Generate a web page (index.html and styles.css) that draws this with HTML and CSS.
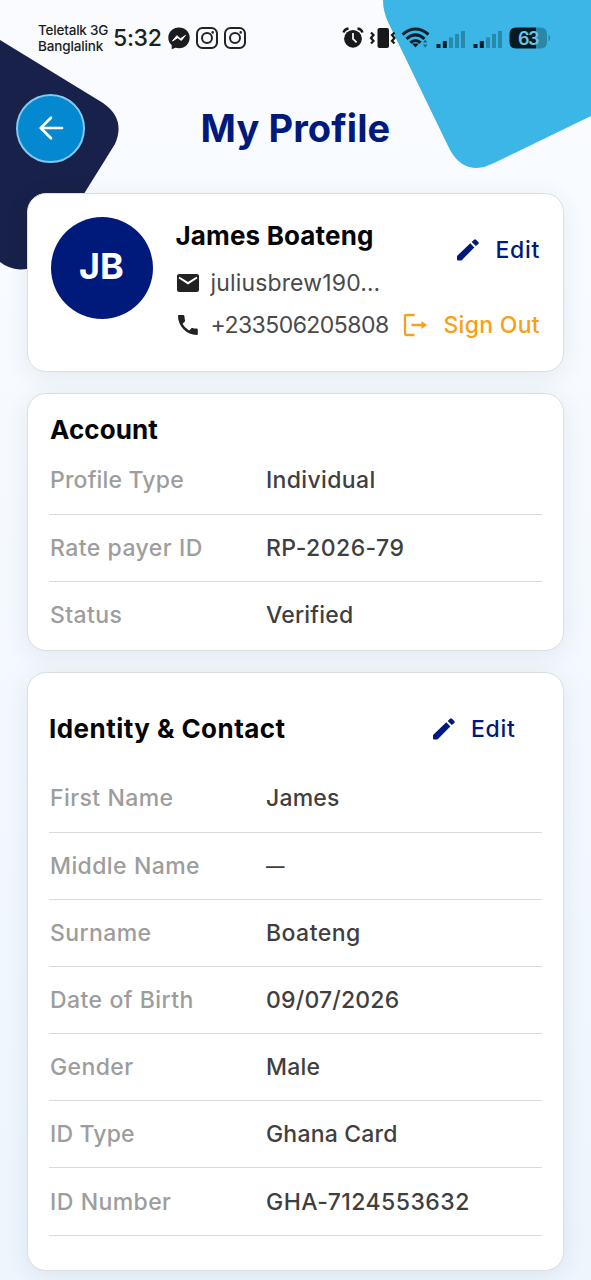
FILE: index.html
```html
<!DOCTYPE html>
<html lang="en">
<head>
<meta charset="utf-8">
<title>My Profile</title>
<link rel="stylesheet" href="styles.css">
</head>
<body>
<svg class="backdrop" width="591" height="280" viewBox="0 0 591 280" aria-hidden="true">
  <path d="M0 40 L103 103 Q126 119 115 144 L44 258 Q34 270 20 269.500 Q8 268.500 0 262Z" fill="#172149"/>
  <path d="M383 0 Q383 11 388 22 L450 150 Q460 168 477 168 Q485 167.500 493 163.500 L591 116 V0Z" fill="#3bb6e7"/>
</svg>
<div class="screen">
  <div class="statusbar">
    <div class="carrier"><span class="c1">Teletalk 3G</span><span class="c2">Banglalink</span></div>
    <span class="clock">5:32</span>
    <svg class="messenger" width="22" height="23" viewBox="0 0 22 23"><path d="M11 0.500C4.800 .5 .3 5 .3 10.700c0 3 1.400 5.600 3.400 7.400v4.100l3.800-1.400c1.100.3 2.300.4 3.500.4 6.200 0 10.700-4.700 10.700-10.500S17.200.5 11 .5Z" fill="#1b1c1e"/><path d="M4.500 14 8.800 8.700 12.400 11.800 17.500 8.400 13.300 13.400 9.700 10.700Z" fill="#fff" stroke="#fff" stroke-width="1" stroke-linejoin="round"/></svg>
    <svg class="insta" width="22" height="22" viewBox="0 0 22 22" fill="none" stroke="#222325" stroke-width="2"><rect x="1" y="1" width="20" height="20" rx="5.500"/><circle cx="11" cy="11" r="5"/><circle cx="16.700" cy="5.400" r=".7" stroke-width="1.200"/></svg>
    <svg class="insta" width="22" height="22" viewBox="0 0 22 22" fill="none" stroke="#222325" stroke-width="2"><rect x="1" y="1" width="20" height="20" rx="5.500"/><circle cx="11" cy="11" r="5"/><circle cx="16.700" cy="5.400" r=".7" stroke-width="1.200"/></svg>
    <svg class="system" width="212" height="24" viewBox="0 0 212 24">
      <g fill="#17191b">
        <circle cx="13" cy="12.800" r="8.900"/>
        <path d="M3.500 6.500Q4.500 3 8.500 2.500M17.500 2.500Q21.500 3 22.500 6.500" fill="none" stroke="#17191b" stroke-width="2.400"/>
        <path d="M13 7v6l3.600 3.300" fill="none" stroke="#fff" stroke-width="1.700"/>
        <rect x="37.500" y="2" width="11.500" height="20" rx="2"/>
        <path d="M31 6.500l2.500 2.500-2.500 3 2.500 3-2.500 2.500M54.500 6.500 52 9l2.500 3-2.500 3 2.500 2.500" fill="none" stroke="#17191b" stroke-width="2.200"/>
      </g>
      <g fill="none" stroke="#0b2029" stroke-width="3">
        <path d="M62.500 8.500Q75.500-2.500 88.500 8.500"/>
        <path d="M66.500 12.800Q75.500 5 84.500 12.800"/>
        <path d="M70.300 16.700Q75.500 12.200 80.700 16.700"/>
      </g>
      <path d="M72 17.500h7L75.500 21.500Z" fill="#0b2029"/>
      <path d="M83 16.500 85.200 13.500 87.400 16.500ZM83 18.500 85.200 21.500 87.400 18.500Z" fill="#18617c"/>
      <g fill="#071e29"><rect x="96.500" y="18" width="4" height="4"/><rect x="102.800" y="15" width="4" height="7"/><rect x="133.500" y="18" width="4" height="4"/><rect x="139.800" y="15" width="4" height="7"/></g>
      <g fill="#278aad"><rect x="109" y="11.500" width="4" height="10.500"/><rect x="115" y="8" width="4" height="14"/><rect x="121" y="5" width="4" height="17"/><rect x="146" y="11.500" width="4" height="10.500"/><rect x="152" y="8" width="4" height="14"/><rect x="158" y="5" width="4" height="17"/></g>
      <path d="M176 1.500h20v21h-20q-6.500 0-6.500-6.500V8q0-6.500 6.500-6.500Z" fill="#071a22"/>
      <path d="M196 1.500h4.500Q207 1.500 207 8v8q0 6.500-6.500 6.500H196Z" fill="#2b87a8"/>
      <path d="M208.500 8.500q3.500 3 0 7Z" fill="#2b87a8"/>
      <text class="battery" x="178" y="18.500">63</text>
    </svg>
  </div>

  <header class="topbar">
    <button class="back" aria-label="Back"><svg width="26" height="26" viewBox="0 0 26 26" fill="none" stroke="#fff" stroke-width="2.700" stroke-linecap="round" stroke-linejoin="round"><path d="M24 13H3M13 2.800 2.700 13 13 23.200"/></svg></button>
    <h1>My Profile</h1>
  </header>

  <main>
    <section class="card person">
      <div class="avatar">JB</div>
      <div class="details">
        <h2 class="name">James Boateng</h2>
        <p class="contact mail"><svg width="24" height="20" viewBox="0 0 24 20"><rect x="1" y="1" width="22" height="18" rx="2.200" fill="#222"/><path d="M3 4.500 12 10.200 21 4.500" fill="none" stroke="#fff" stroke-width="2"/></svg><span>juliusbrew190…</span></p>
        <p class="contact phone"><svg width="24" height="24" viewBox="0 0 24 24"><path fill="#222" d="M6.600 10.800c1.500 2.800 3.800 5.100 6.600 6.600l2.200-2.200c.3-.3.700-.4 1-.2 1.200.4 2.400.6 3.700.6.600 0 1.700.4 1.700 1v4.400c0 .6-.4 1-1 1C10.600 22 2 13.400 2 3.100c0-.6.400-1 1-1h4.500c.6 0 1 1.100 1 1.700 0 1.300.2 2.500.6 3.700.1.300 0 .7-.3 1Z"/></svg><span>+233506205808</span></p>
      </div>
      <div class="actions">
        <a class="edit"><svg width="26" height="26" viewBox="0 0 26 26" fill="#001a7c"><path d="M3 19 16.300 6.200l4 4.200L7.500 23.500H4Q3 23.500 3 22.500ZM17.700 4.900l2.300-2.200q1-.9 2 0l2.300 2.300q1 1 0 2L21.800 9Z"/></svg><span>Edit</span></a>
        <a class="signout"><svg width="24" height="24" viewBox="0 0 24 24" fill="none" stroke="#f7a01b" stroke-width="2.300"><path d="M11.500 2H3Q2 2 2 3v18q0 1 1 1h8.500M8.500 12h12"/><path d="m18.500 8 5.500 4-5.500 4Z" fill="#f7a01b" stroke="none"/></svg><span>Sign Out</span></a>
      </div>
    </section>

    <section class="card account">
      <h2>Account</h2>
      <dl>
        <div class="row"><dt class="snug">Profile Type</dt><dd>Individual</dd></div>
        <div class="row"><dt>Rate payer ID</dt><dd class="wide">RP-2026-79</dd></div>
        <div class="row"><dt>Status</dt><dd class="snug">Verified</dd></div>
      </dl>
    </section>

    <section class="card identity">
      <div class="heading"><h2>Identity &amp; Contact</h2><a class="edit"><svg width="26" height="26" viewBox="0 0 26 26" fill="#001a7c"><path d="M3 19 16.300 6.200l4 4.200L7.500 23.500H4Q3 23.500 3 22.500ZM17.700 4.900l2.300-2.200q1-.9 2 0l2.300 2.300q1 1 0 2L21.800 9Z"/></svg><span>Edit</span></a></div>
      <dl>
        <div class="row"><dt>First Name</dt><dd class="snug">James</dd></div>
        <div class="row"><dt>Middle Name</dt><dd class="empty">—</dd></div>
        <div class="row"><dt>Surname</dt><dd class="wide">Boateng</dd></div>
        <div class="row"><dt>Date of Birth</dt><dd class="snug">09/07/2026</dd></div>
        <div class="row"><dt>Gender</dt><dd class="snug">Male</dd></div>
        <div class="row"><dt class="snug">ID Type</dt><dd class="snug">Ghana Card</dd></div>
        <div class="row"><dt>ID Number</dt><dd class="wide">GHA-7124553632</dd></div>
      </dl>
    </section>
  </main>
</div>
</body>
</html>
```
FILE: styles.css
```css
* { box-sizing: border-box; margin: 0; padding: 0; }
html { height: 1280px; overflow: hidden; }
body {
  height: 1280px;
  overflow: hidden;
  position: relative;
  font-family: Inter, "Open Sans", sans-serif;
  background: linear-gradient(180deg, #fafbff 0%, #f8fbff 20%, #edf5fd 100%);
}
svg { display: block; flex: none; }
.backdrop { position: absolute; top: 0; left: 0; }
.screen { position: relative; width: 591px; }

.statusbar { display: flex; align-items: center; height: 76px; padding-left: 38px; color: #1d1e20; }
.carrier { display: flex; flex-direction: column; width: 71px; margin-top: -1px; font-size: 13.500px; line-height: 16px; font-weight: 500; white-space: nowrap; }
.c1 { letter-spacing: -0.200px; }
.c2 { letter-spacing: -0.150px; }
.clock { width: 51px; margin-left: 4px; font-size: 23px; line-height: 30px; font-weight: 500; letter-spacing: -0.300px; }
.messenger { margin-left: 4px; }
.insta { margin-left: 6px; }
.system { margin-left: 94px; }
.battery { font: 600 18px Inter, sans-serif; fill: #6cc4e5; letter-spacing: -1.500px; }

.topbar { display: flex; align-items: center; height: 117px; padding: 0 0 13px 16px; }
.back { display: flex; align-items: center; justify-content: center; width: 69px; height: 69px; border: 2px solid #82c8f0; border-radius: 50%; background: #0489d0; font: inherit; }
h1 { margin-left: 115.500px; font-size: 38px; line-height: 48px; font-weight: 700; color: #001a7c; letter-spacing: .1px; white-space: nowrap; }

main { display: flex; flex-direction: column; gap: 21px; width: 591px; padding: 0 27px 0 26.500px; }
.card { background: #fff; border: 1px solid #dcdee1; border-radius: 19px; box-shadow: 0 4px 24px rgba(40, 50, 80, .09); }
.card h2 { font-size: 26px; line-height: 32px; font-weight: 700; color: #050505; white-space: nowrap; }

.person { display: flex; height: 179px; padding: 23px 23px 0; }
.avatar { display: flex; align-items: center; justify-content: center; flex: none; width: 102px; height: 102px; border-radius: 50%; background: #001a7c; color: #fff; font-size: 36px; font-weight: 700; padding-bottom: 4px; }
.details { width: 213px; margin-left: 23px; padding-top: 3px; flex: none; }
.card .name { letter-spacing: .150px; }
.contact { display: flex; align-items: center; gap: 11px; height: 32px; font-size: 23px; color: #4a4a4a; white-space: nowrap; }
.mail { margin-top: 15px; letter-spacing: .150px; }
.phone { margin-top: 10px; letter-spacing: -.540px; }
.actions { display: flex; flex-direction: column; align-items: flex-end; flex: 1; padding-top: 17px; }
.edit, .signout { display: flex; align-items: center; height: 32px; font-size: 23px; font-weight: 500; white-space: nowrap; }
.edit { gap: 15px; color: #001a7c; letter-spacing: .700px; }
.signout { gap: 16px; margin-top: 43px; color: #f7a01b; letter-spacing: .300px; }

.account { height: 258px; padding: 20px 21.500px 0; }
.account h2 { letter-spacing: .100px; padding-left: 1px; }
.account dl { margin-top: 1px; }
.row { display: flex; align-items: center; height: 67.200px; border-bottom: 1.500px solid #dadada; font-size: 23px; line-height: 30px; white-space: nowrap; }
.row:first-child { height: 67.500px; }
.account .row:last-child { border-bottom: 0; }
.row dt { width: 216px; padding-left: 1px; color: #9d9d9d; font-weight: 500; letter-spacing: .400px; word-spacing: .500px; }
.row dd { padding-left: 1px; color: #3f3f3f; font-weight: 550; letter-spacing: .350px; }
.row .wide { letter-spacing: .450px; }
.row .snug { letter-spacing: .180px; word-spacing: 0; }
.row .empty { font-size: 18.500px; }
.identity { height: 599px; padding: 39px 21.500px 0; }
.identity h2 { letter-spacing: .450px; }
.heading { display: flex; justify-content: space-between; align-items: center; height: 34px; padding-right: 26px; }
.identity dl { margin-top: 19px; }
```
